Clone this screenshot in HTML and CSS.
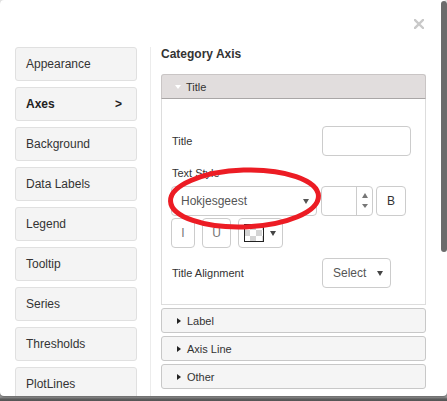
FILE: index.html
```html
<!DOCTYPE html>
<html lang="en">
<head>
<meta charset="utf-8">
<title>Chart Settings</title>
<link rel="stylesheet" href="styles.css">
</head>
<body>
<div class="modal">
  <div class="modal-top">
    <button class="close" aria-label="Close">
      <svg width="10" height="10" viewBox="0 0 10 10"><path d="M1 1L9 9M9 1L1 9" stroke="#c9c9c9" stroke-width="2.4" stroke-linecap="square"/></svg>
    </button>
  </div>
  <div class="modal-main">
    <nav class="sidebar">
      <div class="tab">Appearance</div>
      <div class="tab active"><span>Axes</span><span>&gt;</span></div>
      <div class="tab">Background</div>
      <div class="tab">Data Labels</div>
      <div class="tab">Legend</div>
      <div class="tab">Tooltip</div>
      <div class="tab">Series</div>
      <div class="tab">Thresholds</div>
      <div class="tab">PlotLines</div>
    </nav>
    <section class="content">
      <h2 class="heading">Category Axis</h2>
      <div class="panel-open">
        <div class="panel-head"><span class="caret-down"></span>Title</div>
        <div class="panel-body">
          <div class="row">
            <span class="label">Title</span>
            <div class="box text-input"></div>
          </div>
          <div class="label stack-label">Text Style</div>
          <div class="controls first">
            <div class="box font-select"><span>Hokjesgeest</span><span class="arr"></span></div>
            <div class="box spinner"><span class="spin-val"></span><span class="spin-arrows"><span class="up"></span><span class="down"></span></span></div>
            <div class="box btn bold-btn">B</div>
          </div>
          <div class="controls">
            <div class="box btn i-btn">I</div>
            <div class="box btn u-btn">U</div>
            <div class="box btn color-btn"><span class="swatch"></span><span class="arr dark"></span></div>
          </div>
          <div class="row align-row">
            <span class="label">Title Alignment</span>
            <div class="box align-select"><span>Select</span><span class="arr dark"></span></div>
          </div>
        </div>
      </div>
      <div class="panel-closed"><span class="caret-right"></span>Label</div>
      <div class="panel-closed"><span class="caret-right"></span>Axis Line</div>
      <div class="panel-closed"><span class="caret-right"></span>Other</div>
    </section>
  </div>
  <div class="scroll-thumb"></div>
  <svg class="annotation" width="447" height="396" viewBox="0 0 447 396">
    <ellipse cx="244.5" cy="198.5" rx="74" ry="28.5" transform="rotate(-2 244.5 198.5)" fill="none" stroke="#ec1c24" stroke-width="5"/>
  </svg>
</div>
</body>
</html>
```
FILE: styles.css
```css
* { box-sizing: border-box; }

html, body {
  margin: 0;
  height: 401px;
  overflow: hidden;
}

body {
  background: linear-gradient(to bottom, #e4e4e4 0, #e4e4e4 300px, #9a9a9a 397px, #5c5c5c 399px, #555 401px);
  font-family: "Liberation Sans", Arial, sans-serif;
  color: #333;
}

.modal {
  position: relative;
  width: 447px;
  height: 396px;
  background: #fff;
  border-radius: 4px;
  box-shadow: 0 1px 2px rgba(0, 0, 0, 0.35);
  overflow: hidden;
}

.modal-top {
  height: 47px;
  display: flex;
  justify-content: flex-end;
  align-items: flex-start;
  padding: 19px 23px 0 0;
}

.close {
  border: 0;
  background: none;
  padding: 0;
  width: 10px;
  height: 10px;
  display: block;
}
.close svg { display: block; }

.modal-main {
  display: flex;
  height: 349px;
}

.sidebar {
  width: 150px;
  flex: none;
  padding: 0 13px 0 15px;
  display: flex;
  flex-direction: column;
  gap: 6px;
}

.tab {
  height: 34px;
  flex: none;
  background: #f4f4f4;
  border: 1px solid #e0e0e0;
  border-radius: 3px;
  padding: 0 14px 0 10px;
  display: flex;
  align-items: center;
  justify-content: space-between;
  font-size: 12px;
  color: #333;
}

.tab.active {
  font-weight: bold;
  color: #222;
}

.content {
  flex: none;
  width: 276px;
  border-left: 1px solid #ececec;
  padding-left: 10px;
}

.heading {
  margin: 0 0 13px;
  font-size: 12px;
  line-height: 14px;
  font-weight: bold;
  color: #333;
}

.panel-head {
  height: 25px;
  background: #e1dddd;
  border: 1px solid #c9c5c5;
  border-bottom-color: #a9a6a6;
  border-radius: 3px 3px 0 0;
  display: flex;
  align-items: center;
  padding-left: 13px;
  font-size: 11px;
  color: #333;
}

.caret-down {
  width: 0;
  height: 0;
  border-left: 3px solid transparent;
  border-right: 3px solid transparent;
  border-top: 4px solid #fff;
  margin-right: 5px;
}

.panel-body {
  height: 206px;
  border: 1px solid #ddd;
  border-top: 0;
  padding: 27px 14px 0 10px;
}

.row {
  display: flex;
  align-items: center;
}

.label {
  font-size: 11px;
  line-height: 14px;
  color: #333;
}

.row .label {
  width: 150px;
  flex: none;
}

.box {
  height: 30px;
  border: 1px solid #ccc;
  border-radius: 4px;
  background: #fff;
}

.text-input { width: 89px; }

.stack-label { margin-top: 10px; }

.controls {
  display: flex;
  margin-top: 2px;
}
.controls.first {
  margin-top: 6px;
  gap: 0;
}

.font-select {
  width: 146px;
  margin-left: -1px;
  display: flex;
  align-items: center;
  justify-content: space-between;
  padding: 0 7px 0 9px;
  font-size: 12px;
  color: #555;
}

.arr {
  width: 0;
  height: 0;
  border-left: 3px solid transparent;
  border-right: 3px solid transparent;
  border-top: 5px solid #555;
}
.arr.dark { border-top-color: #444; }

.spinner {
  width: 52px;
  margin-left: 4px;
  display: flex;
}
.spin-val {
  width: 35px;
  border-right: 1px solid #ccc;
}
.spin-arrows {
  flex: 1;
  display: flex;
  flex-direction: column;
  align-items: center;
  justify-content: space-between;
  padding: 6px 0 7px;
}
.spin-arrows .up {
  width: 0; height: 0;
  border-left: 3.5px solid transparent;
  border-right: 3.5px solid transparent;
  border-bottom: 5px solid #777;
}
.spin-arrows .down {
  width: 0; height: 0;
  border-left: 3.5px solid transparent;
  border-right: 3.5px solid transparent;
  border-top: 4px solid #777;
}

.btn {
  display: flex;
  align-items: center;
  justify-content: center;
  font-size: 12px;
}

.bold-btn {
  width: 30px;
  margin-left: 3px;
  color: #333;
}

.i-btn {
  width: 24px;
  margin-left: -1px;
  color: #777;
}

.u-btn {
  width: 29px;
  margin-left: 7px;
  color: #777;
}

.color-btn {
  width: 45px;
  margin-left: 7px;
  justify-content: flex-start;
  padding-left: 5px;
  gap: 6px;
}

.swatch {
  width: 20px;
  height: 18px;
  border: 1px solid #222;
  background-color: #fff;
  background-image: conic-gradient(#d4d4d4 0 25%, #fff 0 50%, #d4d4d4 0 75%, #fff 0);
  background-size: 12px 12px;
  background-position: -1px -1px;
}

.align-row { margin-top: 10px; }

.align-select {
  width: 69px;
  display: flex;
  align-items: center;
  justify-content: space-between;
  padding: 0 7px 0 10px;
  font-size: 12px;
  color: #555;
}

.panel-closed {
  height: 25px;
  margin-top: 3px;
  background: #f5f5f5;
  border: 1px solid #c8c8c8;
  border-radius: 3px;
  display: flex;
  align-items: center;
  padding-left: 15px;
  font-size: 11px;
  color: #333;
}

.caret-right {
  width: 0; height: 0;
  border-top: 3.5px solid transparent;
  border-bottom: 3.5px solid transparent;
  border-left: 4px solid #222;
  margin-right: 6px;
}

.scroll-thumb {
  position: absolute;
  right: 0;
  top: 1px;
  width: 6px;
  height: 251px;
  background: #6b6b6b;
  border-radius: 3px;
}

.annotation {
  position: absolute;
  left: 0;
  top: 0;
  pointer-events: none;
}
```
